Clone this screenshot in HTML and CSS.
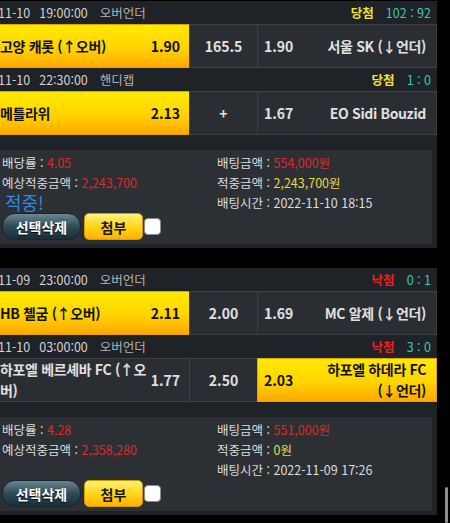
FILE: index.html
```html
<!DOCTYPE html>
<html lang="ko">
<head>
    <meta charset="UTF-8">
    <meta name="viewport" content="width=device-width, initial-scale=1.0">
    <title>배팅내역</title>
    <link rel="stylesheet" href="styles.css">
</head>
<body>
    <div class="page">
        <div class="slip">
            <div class="game-head">
                <span class="date">2022-11-10</span><span class="time">19:00:00</span><span class="type">오버언더</span>
                <span class="result win">당첨</span><span class="score">102 : 92</span>
            </div>
            <div class="odds-row">
                <div class="cell home picked"><span class="team">고양 캐롯 (↑오버)</span><span class="odd">1.90</span></div>
                <div class="cell mid">165.5</div>
                <div class="cell away"><span class="odd">1.90</span><span class="team">서울 SK <span class="pick">(↓언더)</span></span></div>
            </div>
            <div class="game-head">
                <span class="date">2022-11-10</span><span class="time">22:30:00</span><span class="type">핸디캡</span>
                <span class="result win">당첨</span><span class="score">1 : 0</span>
            </div>
            <div class="odds-row">
                <div class="cell home picked"><span class="team">메틀라위</span><span class="odd">2.13</span></div>
                <div class="cell mid">+</div>
                <div class="cell away"><span class="odd">1.67</span><span class="team">EO Sidi Bouzid</span></div>
            </div>
            <div class="summary">
                <div class="sum-left">
                    <p>배당률 : <em class="red">4.05</em></p>
                    <p>예상적중금액 : <em class="red">2,243,700</em></p>
                    <p class="hit">적중!</p>
                    <div class="btns">
                        <button class="btn-del">선택삭제</button><button class="btn-attach">첨부</button><span class="check"></span>
                    </div>
                </div>
                <div class="sum-right">
                    <p>배팅금액 : <em class="red">554,000원</em></p>
                    <p>적중금액 : <em class="gold">2,243,700원</em></p>
                    <p>배팅시간 : 2022-11-10 18:15</p>
                </div>
            </div>
        </div>

        <div class="slip">
            <div class="game-head">
                <span class="date">2022-11-09</span><span class="time">23:00:00</span><span class="type">오버언더</span>
                <span class="result lose">낙첨</span><span class="score">0 : 1</span>
            </div>
            <div class="odds-row">
                <div class="cell home picked"><span class="team">HB 첼굼 (↑오버)</span><span class="odd">2.11</span></div>
                <div class="cell mid">2.00</div>
                <div class="cell away"><span class="odd">1.69</span><span class="team">MC 알제 <span class="pick">(↓언더)</span></span></div>
            </div>
            <div class="game-head">
                <span class="date">2022-11-10</span><span class="time">03:00:00</span><span class="type">오버언더</span>
                <span class="result lose">낙첨</span><span class="score">3 : 0</span>
            </div>
            <div class="odds-row">
                <div class="cell home"><span class="team">하포엘 베르셰바 FC (↑오버)</span><span class="odd">1.77</span></div>
                <div class="cell mid">2.50</div>
                <div class="cell away picked"><span class="odd">2.03</span><span class="team">하포엘 하데라 FC <span class="pick">(↓언더)</span></span></div>
            </div>
            <div class="summary">
                <div class="sum-left">
                    <p>배당률 : <em class="red">4.28</em></p>
                    <p>예상적중금액 : <em class="red">2,358,280</em></p>
                    <p class="hit"></p>
                    <div class="btns">
                        <button class="btn-del">선택삭제</button><button class="btn-attach">첨부</button><span class="check"></span>
                    </div>
                </div>
                <div class="sum-right">
                    <p>배팅금액 : <em class="red">551,000원</em></p>
                    <p>적중금액 : <em class="gold">0원</em></p>
                    <p>배팅시간 : 2022-11-09 17:26</p>
                </div>
            </div>
        </div>
    </div>
    <div class="scroll-thumb"></div>
</body>
</html>
```

FILE: styles.css
```css
body { margin: 0; height: 523px; overflow: hidden; position: relative; background: #000; color: #ddd; font-family: "Noto Sans CJK KR", "Noto Sans", sans-serif; }
.page { margin-left: -39px; width: 476px; padding-top: 1px; }
.slip { background: #1f2226; padding-bottom: 4px; margin-bottom: 20px; }

.game-head { display: flex; align-items: center; height: 23px; padding: 0 6px 0 5px; font-size: 12.5px; }
.date { color: #d4d4d4; margin-right: 9px; }
.time { color: #d4d4d4; margin-right: 12px; }
.type { color: #b2b2b2; }
.result { margin-left: auto; margin-right: 12px; font-weight: bold; }
.win { color: #f0e236; }
.lose { color: #ee2020; }
.score { color: #3cc8b4; }

.odds-row { display: flex; height: 44px; font-size: 14px; font-weight: bold; }
.cell { box-sizing: border-box; display: flex; align-items: center; background: #2a2e32; color: #e0e0e0; border: 1px solid #3c4146; }
.home { width: 228px; padding: 0 9px 0 39px; justify-content: space-between; border-left: none; border-right: none; }
.home .team { padding-right: 2px; }
.mid { width: 68px; justify-content: center; border-right: none; }
.away { flex: 1; padding: 0 10px 0 6px; justify-content: space-between; }
.away .team { text-align: right; }
.team { line-height: 21px; letter-spacing: -0.35px; }
.pick { white-space: nowrap; }
.picked { background: linear-gradient(#ffea00, #ffd400 55%, #ffa800); color: #111; border-color: #e0a400; }

.summary { display: grid; grid-template-columns: 215px 1fr; margin: 15px 5px 0; padding: 3px 5px 4px 36px; background: #2c3034; font-size: 12.5px; line-height: 20px; }
.summary p { margin: 0; height: 20px; }
.summary em { font-style: normal; }
.red { color: #dd2a2a; }
.gold { color: #e8d84a; }
.summary .hit { padding-left: 3px; color: #2b8ae0; font-size: 18px; line-height: 18px; }

.btns { display: flex; align-items: center; height: 27px; }
.btn-del { width: 79px; height: 27px; margin-right: 3px; padding: 0; border: 1px solid #17262d; border-radius: 13px; background: linear-gradient(#6a8793, #2f4a56 50%, #182f39); color: #fff; font: bold 14px "Noto Sans CJK KR", sans-serif; text-shadow: 0 1px 1px #000; }
.btn-attach { width: 59px; height: 27px; padding: 0; border: 1px solid #d49c00; border-radius: 5px; background: linear-gradient(#fff27a, #ffd51e 50%, #ffb200); color: #1a1a1a; font: bold 14px "Noto Sans CJK KR", sans-serif; }
.check { width: 15px; height: 15px; margin-left: 1px; background: #fff; border: 1px solid #8c8c8c; border-radius: 4px; }

.scroll-thumb { position: absolute; left: 445px; top: 487px; width: 3px; height: 36px; background: #8d8d8d; border-radius: 2px; }
```
